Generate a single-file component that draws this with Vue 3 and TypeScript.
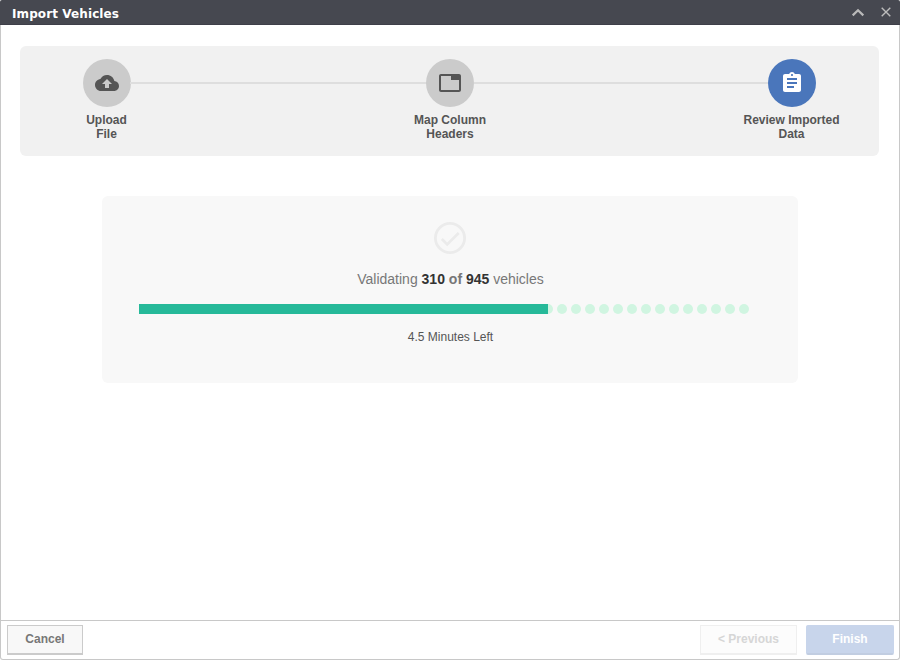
<script setup lang="ts">
interface Step {
  lines: string[]
  icon: string
  active: boolean
}

const steps: Step[] = [
  {
    lines: ['Upload', 'File'],
    icon: 'M19.35 10.04C18.67 6.59 15.64 4 12 4 9.11 4 6.6 5.64 5.35 8.04 2.34 8.36 0 10.91 0 14c0 3.31 2.69 6 6 6h13c2.76 0 5-2.24 5-5 0-2.64-2.05-4.78-4.65-4.96zM14 13v4h-4v-4H7l5-5 5 5h-3z',
    active: false,
  },
  {
    lines: ['Map Column', 'Headers'],
    icon: 'M21 3H3c-1.100 0-2 .9-2 2v14c0 1.100.9 2 2 2h18c1.100 0 2-.9 2-2V5c0-1.100-.9-2-2-2zm0 16H3V5h10v4h8v10z',
    active: false,
  },
  {
    lines: ['Review Imported', 'Data'],
    icon: 'M19 3h-4.180C14.400 1.840 13.300 1 12 1c-1.300 0-2.400.840-2.820 2H5c-1.100 0-2 .9-2 2v14c0 1.100.9 2 2 2h14c1.100 0 2-.9 2-2V5c0-1.100-.9-2-2-2zm-7 0c.550 0 1 .450 1 1s-.450 1-1 1-1-.450-1-1 .450-1 1-1zm2 14H7v-2h7v2zm3-4H7v-2h10v2zm0-4H7V7h10v2z',
    active: true,
  },
]

const validated = 310
const total = 945
const dotCount = 15
const fillWidth = 409
</script>

<template>
  <div class="dialog">
    <header class="titlebar">
      <span class="title">Import Vehicles</span>
      <div class="controls">
        <svg width="14" height="12" viewBox="0 0 14 12"><path d="M1.700 9.400 7 4.200l5.300 5.200" fill="none" stroke="#b9b9b9" stroke-width="2.200" /></svg>
        <svg width="10" height="12" viewBox="0 0 10 12"><path d="M.7 1.700l8.600 8.600M9.300 1.700.7 10.300" fill="none" stroke="#bcbcbc" stroke-width="1.400" /></svg>
      </div>
    </header>
    <main class="body">
      <section class="steps">
        <template v-for="(step, i) in steps" :key="i">
          <div v-if="i > 0" class="line" :class="{ first: i === 1 }"></div>
          <div class="step" :class="{ active: step.active }">
            <div class="circle">
              <svg width="24" height="24" viewBox="0 0 24 24"><path :d="step.icon" fill="currentColor" /></svg>
            </div>
            <div class="label">
              <div v-for="line in step.lines" :key="line">{{ line }}</div>
            </div>
          </div>
        </template>
      </section>
      <section class="progress">
        <svg class="check" width="32" height="32" viewBox="0 0 32 32" fill="none" stroke="#ebebeb">
          <circle cx="16" cy="16" r="14.600" stroke-width="2.800" />
          <path d="M7.800 17l5.400 5.400L24.700 11" stroke-width="2.700" />
        </svg>
        <div class="status">Validating <b>{{ validated }}</b> <b class="of">of</b> <b>{{ total }}</b> vehicles</div>
        <div class="track">
          <div class="dots"><i v-for="n in dotCount" :key="n"></i></div>
          <div class="fill" :style="{ width: fillWidth + 'px' }"></div>
        </div>
        <div class="remaining">4.5 Minutes Left</div>
      </section>
    </main>
    <footer class="footer">
      <button class="btn cancel">Cancel</button>
      <button class="btn previous" disabled>&lt; Previous</button>
      <button class="btn finish" disabled>Finish</button>
    </footer>
  </div>
</template>

<style>
body {
  background: #fff;
}
</style>

<style scoped>
* {
  box-sizing: border-box;
}
.dialog {
  width: 900px;
  height: 660px;
  display: flex;
  flex-direction: column;
  border: 1px solid #c8c8c8;
  border-top: 0;
  border-radius: 3px;
  background: #fff;
  font-family: "Liberation Sans", Arial, sans-serif;
}
.titlebar {
  height: 25px;
  margin: 0 -1px;
  padding: 0 9px 0 12px;
  display: flex;
  flex: none;
  align-items: center;
  justify-content: space-between;
  background: #464850;
  border-bottom: 1px solid #3e3f49;
  border-radius: 2px 2px 0 0;
}
.title {
  color: #fff;
  font: bold 12px/16px "DejaVu Sans", Verdana, sans-serif;
  letter-spacing: 0.1px;
  padding-top: 3px;
}
.controls {
  display: flex;
  gap: 16px;
}
.controls svg {
  display: block;
}
.body {
  flex: 1;
  padding: 21px 20px 0 19px;
}
.steps {
  height: 110px;
  padding: 13px 37px 0 36px;
  display: flex;
  background: #f1f1f1;
  border-radius: 6px;
}
.step {
  width: 101px;
  flex: none;
  display: flex;
  flex-direction: column;
  align-items: center;
}
.circle {
  width: 48px;
  height: 48px;
  display: flex;
  align-items: center;
  justify-content: center;
  border-radius: 50%;
  background: #cbcbcb;
  color: #555;
}
.active .circle {
  background: #4a76bb;
  color: #fff;
}
.label {
  margin-top: 6px;
  color: #555;
  font: bold 12px/14px "Liberation Sans", Arial, sans-serif;
  text-align: center;
  white-space: nowrap;
}
.line {
  flex: 1 1 0;
  height: 2px;
  margin: 23px -27px 0;
  background: #dedede;
}
.line.first {
  flex-basis: 2px;
}
.progress {
  width: 696px;
  height: 187px;
  margin: 40px 0 0 82px;
  padding-top: 26px;
  display: flex;
  flex-direction: column;
  align-items: center;
  background: #f8f8f8;
  border-radius: 6px;
}
.check {
  display: block;
}
.status {
  margin: 17px 0 0 1px;
  font-size: 14px;
  line-height: 16px;
  color: #777;
}
.status b {
  color: #333;
}
.status .of {
  color: #777;
}
.track {
  width: 610px;
  height: 10px;
  margin: 17px 12px 0 0;
  position: relative;
}
.dots {
  display: flex;
  justify-content: flex-end;
  gap: 4px;
}
.dots i {
  width: 10px;
  height: 10px;
  border-radius: 50%;
  background: #d0f5e1;
}
.fill {
  position: absolute;
  left: 0;
  top: 0;
  height: 10px;
  background: #26b999;
}
.remaining {
  margin: 16px 0 0 1px;
  font-size: 12px;
  line-height: 14px;
  color: #555;
}
.footer {
  height: 39px;
  flex: none;
  display: flex;
  align-items: flex-start;
  padding: 4px 5px 0 6px;
  border-top: 1px solid #c8c8c8;
}
.btn {
  height: 30px;
  padding: 0 0 1px;
  font: bold 12px/14px "Liberation Sans", Arial, sans-serif;
  border: 1px solid #cbcbcb;
  border-bottom-width: 2px;
  background: #f8f8f8;
}
.cancel {
  width: 76px;
  color: #777;
}
.previous {
  width: 97px;
  margin-left: auto;
  color: #d6d6d6;
  background: #fcfcfc;
  border-color: #efefef;
}
.finish {
  width: 88px;
  margin-left: 9px;
  color: #fff;
  background: #c8d5eb;
  border-color: #c8d5eb;
  border-bottom-color: #c1cde1;
  border-radius: 2px;
}
</style>
